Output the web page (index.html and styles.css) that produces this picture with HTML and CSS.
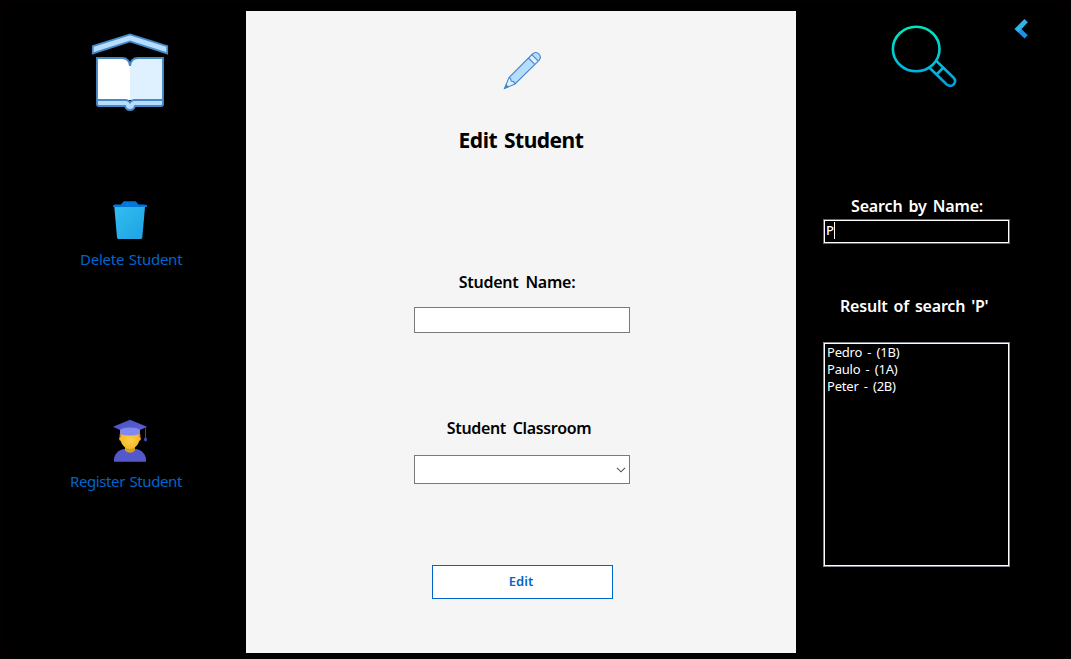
FILE: index.html
```html
<!DOCTYPE html>
<html lang="en">
<head>
<meta charset="utf-8">
<title>Edit Student</title>
<link rel="stylesheet" href="styles.css">
</head>
<body>
<div class="app">
  <nav class="sidebar">
    <svg class="logo" width="80" height="84" viewBox="0 0 80 84">
      <path d="M2.800 16.200 40 4.400l37.200 11.800v7.200L40 11.500 2.800 23.400z" fill="#b6dcfe" stroke="#4788c7" stroke-width="1.800"/>
      <path d="M7 28h25c5 0 7.500 3 8 8v34H7z" fill="#fff"/>
      <path d="M73 28H48c-5 0-7.500 3-8 8v34h33z" fill="#dff0fe"/>
      <path d="M7 70h29q2 0 4 2.500 2-2.500 4-2.500h29v4q0 2-2 2H45q-1 4-5 4t-5-4H9q-2 0-2-2z" fill="#b6dcfe"/>
      <path d="M7 28h25c5 0 7.500 3 8 8 .5-5 3-8 8-8h25v46q0 2-2 2H45q-1 4-5 4t-5-4H9q-2 0-2-2zM7 70h29q2 0 4 2.500 2-2.500 4-2.500h29" fill="none" stroke="#4788c7" stroke-width="1.900"/>
    </svg>
    <a class="action delete">
      <svg width="36" height="42" viewBox="0 0 36 42">
        <defs><linearGradient id="bin" x1="0" y1="0" x2="1" y2="1"><stop offset="0" stop-color="#32bdef"/><stop offset="1" stop-color="#1ea2e4"/></linearGradient></defs>
        <path d="M2.300 7h30.700l-2.700 30.500q-.2 1.500-2 1.500H7q-1.800 0-2-1.500z" fill="url(#bin)"/>
        <path d="M1 7V6q0-1.500 2-1.500h6L11 2q.6-.8 1.600-.8h10.200q1 0 1.600.8l2 2.500H32q3 0 3 1.500v1z" fill="#0077d9"/>
      </svg>
      <span class="label-delete">Delete Student</span>
    </a>
    <a class="action register">
      <svg width="36" height="46" viewBox="0 0 36 46">
        <defs>
          <linearGradient id="cap" x1="0" y1="0" x2="1" y2="1"><stop offset="0" stop-color="#4a50c0"/><stop offset="1" stop-color="#5c62d8"/></linearGradient>
          <radialGradient id="face"><stop offset="0" stop-color="#ffd04c"/><stop offset="1" stop-color="#f5b725"/></radialGradient>
        </defs>
        <path d="M2 43.800V42c0-6 4.500-10 10-11h12c5.500 1 10 5 10 11v1.800z" fill="#5359cc"/>
        <path d="M13 27h10v5c-1.500 3.700-8.500 3.700-10 0z" fill="#d69c1c"/>
        <path d="M7.500 16h21v5.500l-3 1H10l-2.500-1z" fill="#bd4c16"/>
        <path d="M8.500 14h19v5q1.300 0 1.300 1.700T27.200 23C26 27.500 22 31 18 31s-8-3.500-9.200-8q-1.600-.5-1.600-2.300T8.500 19z" fill="url(#face)"/>
        <path d="M8 8.500h20V16q-10 3-20 0z" fill="#8188ee"/>
        <path d="M18 1.800 35 8.700l-7 3.200c-4-3.200-16-3.200-20 0L1 8.700z" fill="url(#cap)"/>
        <path d="M33.500 9v12" stroke="#4046a8" stroke-width="1"/>
        <ellipse cx="33.500" cy="21.500" rx="1.500" ry="2" fill="#464cb5"/>
      </svg>
      <span class="label-register">Register Student</span>
    </a>
  </nav>
  <main class="panel">
    <svg class="pencil" width="40" height="40" viewBox="0 0 40 40">
      <path d="m2.500 37.500 4.500-11L30.500 3c2-2 4-1.900 6-.4 2.200 2 2.300 4.700.5 6.700L13 33z" fill="#b6dcfe"/>
      <path d="m2.500 37.500 4.500-11 6 6.500zM26.500 7l3-3 6.500 6.500-3.200 3z" fill="#dff0fe"/>
      <path d="m2.500 37.500 4.500-11L30.500 3c2-2 4-1.900 6-.4 2.200 2 2.300 4.700.5 6.700L13 33zM7 26.500l1.500 1 .7 2.500 2.500.7L13 33M26.500 7l6.300 6.300M29.800 3.700l6.500 6.500" fill="none" stroke="#4788c7" stroke-width="1.100"/>
      <path d="m2 38 2-5 3 3z" fill="#4788c7"/>
    </svg>
    <h1 class="title">Edit Student</h1>
    <label class="field-label name-label" for="name">Student Name:</label>
    <input class="field name-field" id="name" type="text">
    <label class="field-label room-label">Student Classroom</label>
    <div class="field room-field">
      <svg width="10" height="6" viewBox="0 0 10 6"><path d="m1 .8 4 4 4-4" fill="none" stroke="#555" stroke-width="1.100"/></svg>
    </div>
    <button class="submit">Edit</button>
  </main>
  <aside class="search">
    <div class="search-top">
      <svg class="magnifier" width="70" height="66" viewBox="0 0 70 66">
        <defs><linearGradient id="lens" gradientUnits="userSpaceOnUse" x1="0" y1="2" x2="0" y2="64"><stop offset="0" stop-color="#00e8bc"/><stop offset=".5" stop-color="#00c8d8"/><stop offset="1" stop-color="#009be5"/></linearGradient></defs>
        <g fill="none" stroke="url(#lens)" stroke-width="2.600">
          <ellipse cx="26.200" cy="25" rx="23.300" ry="22.300"/>
          <path d="m39.500 43.800 17.200 16.700c5.400 4 11-2.300 6.700-7L46.300 36.900M46.500 50.500l7-7"/>
        </g>
      </svg>
      <svg class="back" width="16" height="22" viewBox="0 0 16 22">
        <path d="m10.500 20.500 3.300-3.300-6.800-6.700-3.500 3.300z" fill="#1c91e0"/>
        <path d="m.4 11 10-10 3.400 3.200-9.600 10.300z" fill="#2db3ee"/>
      </svg>
    </div>
    <label class="search-label">Search by Name:</label>
    <div class="search-box"><span>P</span><i class="caret"></i></div>
    <p class="result-label">Result of search 'P'</p>
    <ul class="results">
      <li>Pedro - (1B)</li>
      <li>Paulo - (1A)</li>
      <li>Peter - (2B)</li>
    </ul>
  </aside>
</div>
</body>
</html>
```
FILE: styles.css
```css
* { box-sizing: border-box; }
body {
  margin: 0;
  background: #000;
  font-family: "Noto Sans", "Open Sans", sans-serif;
}
.app {
  display: grid;
  grid-template-columns: 246px 550px 275px;
  width: 1071px;
  height: 659px;
  overflow: hidden;
  background: #000;
  box-shadow: inset 0 0 8px 4px #050001;
}
svg { display: block; flex: none; }
.sidebar, .panel, .search { display: flex; flex-direction: column; }
.logo { margin: 30px 0 0 90px; }
.action {
  display: flex;
  flex-direction: column;
  color: #0066cc;
  font-size: 15px;
  line-height: 20px;
  white-space: nowrap;
}
.action svg { margin-left: 112px; }
.delete { margin-top: 86px; }
.register { margin-top: 149px; }
.label-delete { margin: 7px 0 0 80px; letter-spacing: -0.25px; word-spacing: 1px; }
.label-register { margin: 7px 0 0 70px; letter-spacing: -0.4px; word-spacing: 1px; }
.panel {
  align-items: center;
  height: 642px;
  margin-top: 11px;
  background: #f5f5f5;
  color: #000;
}
.pencil { margin: 40px 0 0 1px; }
.title {
  margin: 34px 0 0;
  font-size: 21px;
  line-height: 30px;
  font-weight: 700;
  letter-spacing: -0.5px;
  word-spacing: 2px;
  white-space: nowrap;
}
.field-label, .search-label, .result-label {
  font-size: 16px;
  line-height: 20px;
  font-weight: 600;
  white-space: nowrap;
}
.name-label { margin-top: 117px; margin-right: 8px; letter-spacing: -0.25px; word-spacing: 3px; }
.field {
  width: 216px;
  margin-left: 2px;
  border: 1px solid #7a7a7a;
  background: #fff;
}
.name-field { height: 26px; margin-top: 15px; padding: 0 4px; outline: 0; }
.room-label { margin-top: 85px; margin-right: 4px; letter-spacing: -0.35px; word-spacing: 3px; }
.room-field {
  display: flex;
  align-items: center;
  justify-content: flex-end;
  height: 29px;
  margin-top: 17px;
  padding-right: 3px;
}
.submit {
  width: 181px;
  height: 34px;
  margin: 81px 0 0 3px;
  padding: 0 3px 2px 0;
  border: 1px solid #0066cc;
  background: #fff;
  color: #0066cc;
  font: 600 13px/20px "Noto Sans", "Open Sans", sans-serif;
}
.search { color: #fff; }
.search-top { display: flex; height: 196px; padding-left: 94px; }
.magnifier { margin-top: 24px; }
.back { margin: 18px 0 0 54px; }
.search-label { margin-left: 55px; letter-spacing: -0.15px; word-spacing: 2px; }
.search-box {
  display: flex;
  width: 187px;
  height: 25px;
  margin: 3px 0 0 27px;
  border: 1px solid #1b78d0;
  box-shadow: inset 0 0 0 1px #fff;
  padding: 1px 2px;
  font-size: 13px;
  line-height: 18px;
  font-weight: 500;
}
.caret { width: 1px; height: 17px; margin-top: 1px; background: #fff; }
.result-label { margin: 52px 0 0 44px; letter-spacing: -0.2px; word-spacing: 2px; }
.results {
  width: 187px;
  height: 225px;
  margin: 26px 0 0 27px;
  padding: 1px 3px;
  border: 1px solid #828790;
  box-shadow: inset 0 0 0 1px #fff;
  list-style: none;
  font-size: 13px;
  line-height: 17px;
  letter-spacing: -0.2px;
  word-spacing: 2px;
  white-space: nowrap;
}
```
